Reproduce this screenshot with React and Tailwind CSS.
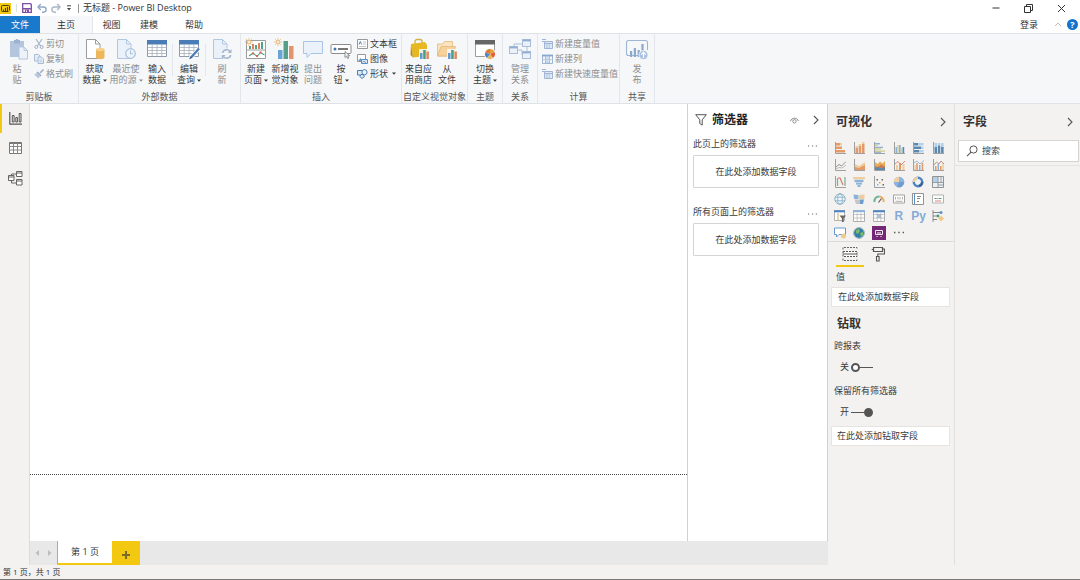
import React, { useState } from "react";

/* ---------- drawing helpers ---------- */

function Svg({ w = 12, h = 12, box, children }) {
  return (
    <svg
      width={w}
      height={h}
      viewBox={box || `0 0 ${w} ${h}`}
      fill="none"
      className="block shrink-0"
      aria-hidden="true"
    >
      {children}
    </svg>
  );
}

const Caret = () => (
  <span className="ml-[2px] inline-block align-middle">
    <Svg w={4} h={3}>
      <path d="M0 .5h4L2 2.8z" fill="currentColor" />
    </Svg>
  </span>
);

const Chevron = () => (
  <Svg w={6} h={10}>
    <path d="M1 1l4 4-4 4" stroke="#555" strokeWidth="1.1" />
  </Svg>
);

const AXIS = "#959595";
const OR = "#e39a66";
const BL = "#8fb3d8";
const NV = "#5c87af";
const TN = "#efcd9c";

const Axes = () => <path d="M1.5 0v11.5H12" stroke={AXIS} strokeWidth=".9" />;

/* [x, y, w, h, colour] tuples drawn as filled bars */
const Bars = ({ list }) =>
  list.map(([x, y, w, h, c], i) => (
    <rect key={i} x={x} y={y} width={w} height={h} fill={c} />
  ));

/* ---------- ribbon icons ---------- */

const PasteIcon = () => (
  <Svg w={22} h={22}>
    <path d="M4 3h14v16H4z" fill="#b4c5de" />
    <path d="M8 2h1.500a1.600 1.600 0 0 1 3 0H14v3.500H8z" fill="#9db2d0" />
    <path d="M13 9h5l3.500 3.500V21H13z" fill="#eef3f9" stroke="#b4c5de" />
    <path d="M18 9v3.500h3.500" stroke="#b4c5de" />
  </Svg>
);

const CutIcon = () => (
  <Svg w={10} h={10}>
    <path d="M2 0l4.600 7M8 0L3.400 7" stroke="#a3b2c9" strokeWidth="1.100" />
    <circle cx="2.300" cy="8" r="1.500" stroke="#a3b2c9" />
    <circle cx="7.700" cy="8" r="1.500" stroke="#a3b2c9" />
  </Svg>
);

const CopyIcon = () => (
  <Svg w={10} h={10}>
    <path d="M.5.5h4l1.500 1.500v5H.5z" fill="#e6edf6" stroke="#a9bdda" />
    <path d="M4 3h3.500l2 2v4.500H4z" fill="#e6edf6" stroke="#a9bdda" />
    <path d="M5.500 6h2.500M5.500 7.700h2.500" stroke="#a9bdda" strokeWidth=".7" />
  </Svg>
);

const BrushIcon = () => (
  <Svg w={10} h={10}>
    <path d="M9.500.5L6 4" stroke="#a3b2c9" strokeWidth="1.600" />
    <path d="M3.500 2.500l4 4-1 1-4-4z" fill="#8fa3c2" />
    <path d="M2.500 4L.3 5.500l4 4L6 7.500z" fill="#b6c5dc" />
  </Svg>
);

const PageShape = ({ stroke, fill }) => (
  <>
    <path d="M2.500 1.500h9L16 6v14.500H2.500z" fill={fill} stroke={stroke} />
    <path d="M11.500 1.500V6H16" stroke={stroke} />
  </>
);

const GetDataIcon = () => (
  <Svg w={22} h={22}>
    <PageShape stroke="#9c9c9c" fill="#fff" />
    <path d="M12 11.500v8c0 2.200 8.500 2.200 8.500 0v-8z" fill="#eeb75c" />
    <ellipse cx="16.250" cy="11.500" rx="4.250" ry="1.700" fill="#f6d08c" />
  </Svg>
);

const RecentIcon = () => (
  <Svg w={22} h={22}>
    <PageShape stroke="#b3c7e2" fill="#eaf1f9" />
    <circle cx="15.500" cy="15.500" r="4.800" fill="#eef4fb" stroke="#a9c0de" strokeWidth="1.200" />
    <path d="M15.500 12.500v3.300h2.500" stroke="#a9c0de" strokeWidth="1.100" />
  </Svg>
);

const TableShape = () => (
  <>
    <path d="M1.500 2.500h19v16h-19z" fill="#fff" stroke="#8e9aa8" />
    <path d="M1 2h20v4.500H1z" fill="#4a7db5" />
    <path
      d="M1.500 9.500h19M1.500 12.500h19M1.500 15.500h19M6.200 6.500v12M11 6.500v12M15.800 6.500v12"
      stroke="#a6b0bc"
      strokeWidth=".8"
    />
  </>
);

const EnterDataIcon = () => (
  <Svg w={22} h={22}>
    <TableShape />
  </Svg>
);

const EditQueryIcon = () => (
  <Svg w={22} h={22}>
    <TableShape />
    <path d="M21 10.500L12.500 20" stroke="#fff" strokeWidth="4" />
    <path d="M21 10.500L13.500 19" stroke="#4a7db5" strokeWidth="2.400" />
    <path d="M12.500 18l2 1.800-3.300 1.500z" fill="#2c5687" />
  </Svg>
);

const RefreshIcon = () => (
  <Svg w={22} h={22}>
    <PageShape stroke="#b3c7e2" fill="#eaf1f9" />
    <circle cx="15.500" cy="16" r="5.500" fill="#f5f8fb" />
    <path d="M11.500 15a4.200 4.200 0 0 1 7.500-1.500M19.700 17a4.200 4.200 0 0 1-7.500 1.500" stroke="#a8b9cf" strokeWidth="1.700" />
    <path d="M20.500 11v4h-4zM10.800 21v-4h4z" fill="#a8b9cf" />
  </Svg>
);

const Spark = () => (
  <g stroke="#e8bd80" strokeWidth=".9">
    <path d="M4 0v8M0 4h8M1.200 1.200l5.600 5.600M6.800 1.200L1.200 6.800" />
    <circle cx="4" cy="4" r="1.500" fill="#fff" />
  </g>
);

const NewPageIcon = () => (
  <Svg w={22} h={22}>
    <path d="M1.500 2.500h19v18h-19z" fill="#fff" stroke="#9c9c9c" />
    <path d="M1.500 12h19" stroke="#9c9c9c" />
    <Bars
      list={[
        [4, 8, 2, 3, "#4fa285"],
        [7, 6, 2, 5, "#e0805c"],
        [10, 7, 2, 4, "#4fa285"],
        [13, 5, 2, 6, "#e0805c"],
        [16, 4, 2, 7, "#4fa285"],
      ]}
    />
    <path d="M4 18l4-3 4 3.500 3.500-4 4 2.500" stroke="#4fa285" strokeWidth="1.100" />
    <path d="M7 15.500h2M14.500 14.500h2M11 18h2" stroke="#d96a4d" strokeWidth="1.800" />
    <Spark />
  </Svg>
);

const NewVisualIcon = () => (
  <Svg w={22} h={22}>
    <Bars
      list={[
        [4, 12, 4.500, 9, "#6aa3d6"],
        [9.500, 3, 4.500, 18, "#56a08a"],
        [15, 8, 4.500, 13, "#e4946b"],
      ]}
    />
    <Spark />
  </Svg>
);

const AskIcon = () => (
  <Svg w={22} h={22}>
    <path d="M1.500 3.500h19v12H9l-4 4v-4H1.500z" fill="#eaf1f9" stroke="#a9c4e6" />
  </Svg>
);

const ButtonIcon = () => (
  <Svg w={22} h={22}>
    <rect x="1" y="6.500" width="20" height="9" rx="1" fill="#fff" stroke="#8c8c8c" />
    <circle cx="5" cy="11" r="1.500" fill="#3f75b0" />
    <path d="M8 11h10" stroke="#555" strokeWidth="1.600" />
    <path d="M15 13.500v6l1.500-1.300 1.200 2.400 1.100-.6-1.100-2.300h2z" fill="#fff" stroke="#777" strokeWidth=".8" />
  </Svg>
);

const TextBoxIcon = () => (
  <Svg w={11} h={10}>
    <path d="M.5.5h10v9H.5z" fill="#fff" stroke="#999" />
    <path d="M2 5.500L3.300 2.500l1.300 3" stroke="#3f75b0" strokeWidth=".9" />
    <path d="M6 3h3M6 5h3M2 7.500h7" stroke="#aaa" strokeWidth=".7" />
  </Svg>
);

const ImageIcon = () => (
  <Svg w={11} h={10}>
    <path d="M.5.5h8v7h-8z" fill="#fff" stroke="#999" />
    <path d="M1 7l2.500-3L6 7z" fill="#6a9bce" />
    <path d="M4.500 5.500h6v4h-6z" fill="#d7e5f4" stroke="#5c8dc3" />
    <path d="M5.500 8.500l1.500-1.500 2 2" stroke="#5c8dc3" strokeWidth=".8" />
  </Svg>
);

const ShapesIcon = () => (
  <Svg w={11} h={10}>
    <path d="M.5 1.500h5v4.500h-5z" fill="#dce8f5" stroke="#4a7db5" />
    <circle cx="7.500" cy="3.200" r="2.600" fill="#eef4fb" stroke="#4a7db5" />
    <path d="M5 5l2.700 2.300L5 9.500 2.700 7.300z" fill="#dce8f5" stroke="#4a7db5" />
  </Svg>
);

const MiniBars = () => (
  <>
    <rect x="11" y="11" width="11" height="11" fill="#f5f8fb" opacity=".85" />
    <Bars
      list={[
        [12, 15, 2.500, 6, "#5f9bd0"],
        [15.200, 12, 2.500, 9, "#4b9b83"],
        [18.400, 13.500, 2.500, 7.500, "#e0895e"],
      ]}
    />
  </>
);

const MarketIcon = () => (
  <Svg w={22} h={22}>
    <path d="M7 6V3.500a2 2 0 0 1 2-2h3a2 2 0 0 1 2 2V6" stroke="#d0b040" strokeWidth="1.300" />
    <path d="M3 6l14-2 2 3v11L5 19.500z" fill="#e6b821" />
    <path d="M3 6l2 13.500L2.500 17z" fill="#b98f12" />
    <MiniBars />
  </Svg>
);

const FolderIcon = () => (
  <Svg w={22} h={22}>
    <path d="M1.500 18V6h5l2-2.500h8V18z" fill="#fae3bd" stroke="#e3b878" strokeWidth=".8" />
    <path d="M1.500 18L5 8.500h14.500L17 18z" fill="#f6d29a" stroke="#e3b878" strokeWidth=".8" />
    <MiniBars />
  </Svg>
);

const ThemeIcon = () => (
  <Svg w={22} h={22}>
    <path d="M1.500 2.500h19v16h-19z" fill="#fff" stroke="#9c9c9c" />
    <path d="M1 2h20v4.500H1z" fill="#666" />
    <circle cx="16" cy="16" r="5.800" fill="#f5f8fb" />
    <path d="M16 16V11a5 5 0 0 1 4.500 3z" fill="#e8a33c" />
    <path d="M16 16l4.500-2a5 5 0 0 1-1.500 6z" fill="#e0603c" />
    <path d="M16 16l3 4a5 5 0 0 1-6 0z" fill="#e8b45c" />
    <path d="M16 16l-3 4a5 5 0 0 1-1.800-5.500z" fill="#4f86c6" />
    <path d="M16 16l-4.800-1.500A5 5 0 0 1 16 11z" fill="#e07a3c" />
  </Svg>
);

const RelationIcon = () => (
  <Svg w={22} h={22}>
    <path d="M5 9V6h9M9 12h4v5h1M18 8v5" stroke="#aebfd6" />
    {[
      [0.5, 8.5],
      [13.5, 1.5],
      [13.5, 13.5],
    ].map(([x, y]) => (
      <g key={`${x}-${y}`}>
        <rect x={x} y={y} width="8" height="7" fill="#eaf1f9" stroke="#a9bdda" />
        <path d={`M${x} ${y + 1}h8`} stroke="#93aed2" strokeWidth="1.800" />
      </g>
    ))}
  </Svg>
);

const MeasureIcon = () => (
  <Svg w={11} h={10}>
    <path d="M0 .5h4M0 2.500h3" stroke="#9bb5d8" />
    <path d="M2.500 2.500h8v7h-8z" fill="#dfe9f5" stroke="#9fb5d3" />
    <path d="M3 4.500h7" stroke="#9fb5d3" />
    <path d="M4 6h1.500M6.500 6H8M4 8h1.500M6.500 8H8" stroke="#9fb5d3" />
  </Svg>
);

const ColumnIcon = () => (
  <Svg w={11} h={10}>
    <path d="M.5 1.500h10v8H.5z" fill="#f2f6fb" stroke="#9fb5d3" />
    <path d="M0 1.500h11" stroke="#86a5cf" strokeWidth="1.800" />
    <path d="M3.500 2h4v7h-4z" fill="#cfdff1" stroke="#9fb5d3" strokeWidth=".8" />
    <path d="M.5 5.500h10" stroke="#b6c7dd" strokeWidth=".8" />
  </Svg>
);

const PublishIcon = () => (
  <Svg w={24} h={22}>
    <path d="M15 17.500H3.500a2 2 0 0 1-2-2v-11a2 2 0 0 1 2-2h17a2 2 0 0 1 2 2V12" stroke="#9db6d6" strokeWidth="1.100" />
    <Bars
      list={[
        [5, 13, 2.200, 6, "#8ba8cd"],
        [8.800, 10, 2.200, 9, "#8ba8cd"],
        [12.600, 12, 2.200, 7, "#8ba8cd"],
        [16.400, 6, 2.200, 8, "#8ba8cd"],
      ]}
    />
    <circle cx="18.500" cy="17" r="4.500" fill="#a9c0df" stroke="#f5f8fb" strokeWidth=".8" />
    <path d="M18.500 20v-5.500M16.200 16.600l2.300-2.300 2.300 2.300" stroke="#fff" strokeWidth="1.200" />
  </Svg>
);

/* ---------- ribbon building blocks ---------- */

function BigButton({ icon, lines, caret, disabled, width = "w-7" }) {
  return (
    <button
      type="button"
      disabled={disabled}
      className={`flex shrink-0 flex-col items-center gap-[3px] whitespace-nowrap pt-[2px] leading-[11px] ${width} ${
        disabled ? "text-[#8d8d8d]" : "text-[#3a3a3a]"
      }`}
    >
      {icon}
      <span>
        {lines[0]}
        <br />
        {lines[1]}
        {caret && <Caret />}
      </span>
    </button>
  );
}

function SmallButton({ icon, label, caret, disabled }) {
  return (
    <button
      type="button"
      disabled={disabled}
      className={`flex h-[15px] items-center gap-[2px] whitespace-nowrap ${
        disabled ? "text-[#8d8d8d]" : "text-[#3a3a3a]"
      }`}
    >
      {icon}
      <span>{label}</span>
      {caret && <Caret />}
    </button>
  );
}

function Group({ label, width, children }) {
  return (
    <section
      aria-label={label}
      className={`flex shrink-0 flex-col justify-between border-r border-[#e3e6ea] pt-[2px] ${width}`}
    >
      <div className="flex items-start">{children}</div>
      <div className="whitespace-nowrap pb-px text-center leading-[11px] text-[#555]">{label}</div>
    </section>
  );
}

const Sep = () => <span className="mt-2 h-8 w-px shrink-0 bg-[#e3e6ea]" />;

function Ribbon() {
  return (
    <div className="flex h-[71px] overflow-hidden border-y border-[#dfe2e6] bg-[#f5f7f9]">
      <Group label="剪贴板" width="w-[79px]">
        <BigButton icon={<PasteIcon />} lines={["粘", "贴"]} disabled width="w-[34px]" />
        <div>
          <SmallButton icon={<CutIcon />} label="剪切" disabled />
          <SmallButton icon={<CopyIcon />} label="复制" disabled />
          <SmallButton icon={<BrushIcon />} label="格式刷" disabled />
        </div>
      </Group>
      <Group label="外部数据" width="w-[162px]">
        <BigButton icon={<GetDataIcon />} lines={["获取", "数据"]} caret width="w-[31px]" />
        <BigButton icon={<RecentIcon />} lines={["最近使", "用的源"]} caret disabled width="w-8" />
        <BigButton icon={<EnterDataIcon />} lines={["输入", "数据"]} width="w-[30px]" />
        <Sep />
        <BigButton icon={<EditQueryIcon />} lines={["编辑", "查询"]} caret width="w-8" />
        <Sep />
        <BigButton icon={<RefreshIcon />} lines={["刷", "新"]} disabled width="w-8" />
      </Group>
      <Group label="插入" width="w-[161px]">
        <BigButton icon={<NewPageIcon />} lines={["新建", "页面"]} caret width="w-[30px]" />
        <BigButton icon={<NewVisualIcon />} lines={["新增视", "觉对象"]} />
        <BigButton icon={<AskIcon />} lines={["提出", "问题"]} disabled />
        <BigButton icon={<ButtonIcon />} lines={["按", "钮"]} caret />
        <div className="ml-[2px]">
          <SmallButton icon={<TextBoxIcon />} label="文本框" />
          <SmallButton icon={<ImageIcon />} label="图像" />
          <SmallButton icon={<ShapesIcon />} label="形状" caret />
        </div>
      </Group>
      <Group label="自定义视觉对象" width="w-[66px]">
        <BigButton icon={<MarketIcon />} lines={["来自应", "用商店"]} width="w-[33px]" />
        <BigButton icon={<FolderIcon />} lines={["从", "文件"]} width="w-6" />
      </Group>
      <Group label="主题" width="w-[35px]">
        <BigButton icon={<ThemeIcon />} lines={["切换", "主题"]} caret width="w-[34px]" />
      </Group>
      <Group label="关系" width="w-[35px]">
        <BigButton icon={<RelationIcon />} lines={["管理", "关系"]} disabled width="w-[34px]" />
      </Group>
      <Group label="计算" width="w-[82px]">
        <div className="ml-1">
          <SmallButton icon={<MeasureIcon />} label="新建度量值" disabled />
          <SmallButton icon={<ColumnIcon />} label="新建列" disabled />
          <SmallButton icon={<MeasureIcon />} label="新建快速度量值" disabled />
        </div>
      </Group>
      <Group label="共享" width="w-[35px]">
        <BigButton icon={<PublishIcon />} lines={["发", "布"]} disabled width="w-[34px]" />
      </Group>
    </div>
  );
}

/* ---------- title bar and ribbon tabs ---------- */

function TitleBar() {
  return (
    <header className="flex h-4 items-center bg-white text-[#333]">
      <span className="flex h-[11px] w-[11px] items-center justify-center bg-[#f2c811]">
        <Svg w={9} h={7}>
          <path d="M7.500 6.500H1.500a1 1 0 0 1-1-1v-4a1 1 0 0 1 1-1h6a1 1 0 0 1 1 1v4" stroke="#4a3f10" />
          <path d="M2.500 6V4.500M4.500 6V3M6.500 6V2" stroke="#4a3f10" strokeWidth="1.100" />
        </Svg>
      </span>
      <span className="mx-[5px] h-2 w-px bg-[#ddd]" />
      <button type="button" aria-label="保存">
        <Svg w={10} h={10}>
          <path d="M.7.7h7.800l.8.8v7.800H.7z" fill="#fff" stroke="#7f4ea0" strokeWidth="1.300" />
          <path d="M1 5h8v1.500H1z" fill="#7f4ea0" />
          <path d="M3 6.500h4V9H3z" fill="#7f4ea0" />
          <path d="M4 7.500h1V9H4z" fill="#fff" />
        </Svg>
      </button>
      <button type="button" aria-label="撤消" className="ml-[5px]">
        <Svg w={10} h={10}>
          <path d="M1 4h5.500a2.500 2.500 0 0 1 0 5.200H5" stroke="#8fa8c6" strokeWidth="1.400" />
          <path d="M3.800 1L1 4l2.800 3" stroke="#8fa8c6" strokeWidth="1.400" />
        </Svg>
      </button>
      <button type="button" aria-label="恢复" className="ml-1">
        <Svg w={10} h={10}>
          <path d="M9 4H3.500a2.500 2.500 0 0 0 0 5.200H5" stroke="#a9b7c7" strokeWidth="1.400" />
          <path d="M6.200 1L9 4 6.200 7" stroke="#a9b7c7" strokeWidth="1.400" />
        </Svg>
      </button>
      <button type="button" aria-label="自定义快速访问工具栏" className="ml-[6px]">
        <Svg w={4} h={6}>
          <path d="M0 .8h4" stroke="#444" />
          <path d="M0 3h4L2 5.500z" fill="#444" />
        </Svg>
      </button>
      <span className="ml-[7px] mr-1 h-[9px] w-px bg-[#999]" />
      <h1 className="whitespace-nowrap leading-4">无标题 - Power BI Desktop</h1>
      <div className="ml-auto flex items-center gap-6 pr-[14px]">
        <button type="button" aria-label="最小化">
          <Svg w={8} h={10}>
            <path d="M.5 5h7" stroke="#333" />
          </Svg>
        </button>
        <button type="button" aria-label="还原">
          <Svg w={9} h={9}>
            <path d="M.5 2.500h6v6h-6z" stroke="#333" />
            <path d="M2.500 2.500v-2h6v6h-2" stroke="#333" />
          </Svg>
        </button>
        <button type="button" aria-label="关闭">
          <Svg w={9} h={9}>
            <path d="M1 1l7 7M8 1L1 8" stroke="#333" />
          </Svg>
        </button>
      </div>
    </header>
  );
}

function RibbonTabs() {
  return (
    <nav className="flex h-[17px] items-stretch bg-white text-[#333]">
      <button type="button" className="w-10 bg-[#1979ca] text-white">
        文件
      </button>
      <button type="button" className="w-[53px] border-r border-[#e3e6ea] bg-[#f5f7f9]">
        主页
      </button>
      <button type="button" className="w-[37px]">
        视图
      </button>
      <button type="button" className="w-[38px]">
        建模
      </button>
      <button type="button" className="w-[52px]">
        帮助
      </button>
      <div className="ml-auto flex items-center pr-[2px]">
        <button type="button" className="mr-4">
          登录
        </button>
        <button type="button" aria-label="折叠功能区" className="mr-[5px]">
          <Svg w={8} h={5}>
            <path d="M1 4l3-3 3 3" stroke="#cdbcae" />
          </Svg>
        </button>
        <button
          type="button"
          aria-label="帮助主题"
          className="h-[11px] w-[11px] rounded-full bg-[#1272cc] text-[9px] font-bold leading-[11px] text-white"
        >
          ?
        </button>
      </div>
    </nav>
  );
}

/* ---------- left rail ---------- */

function Rail() {
  return (
    <nav className="flex w-[30px] shrink-0 flex-col border-r border-[#dcdcdc] bg-[#f3f2f1]">
      <button
        type="button"
        aria-label="报表"
        className="flex h-[29px] items-center border-l-2 border-[#f2c811] pl-[7px]"
      >
        <Svg w={13} h={13}>
          <path d="M.8 0v12.200H13" stroke="#555" strokeWidth="1.200" />
          <path d="M3.300 3.500h1.800v6.500H3.300zM6.800 5.500h1.600V10H6.800zM10.200 1.500h1.800V10h-1.800z" stroke="#555" />
        </Svg>
      </button>
      <button type="button" aria-label="数据" className="flex h-[30px] items-center pl-[9px]">
        <Svg w={13} h={12}>
          <path d="M.5.5h12v11H.5z" fill="#fff" stroke="#777" />
          <path d="M.5 1.500h12" stroke="#777" />
          <path d="M.5 4.500h12M.5 8h12M4.500 1v10.500M8.500 1v10.500" stroke="#888" />
        </Svg>
      </button>
      <button type="button" aria-label="模型" className="flex h-[30px] items-center pl-2">
        <Svg w={15} h={15}>
          <path d="M3.500 4.500V3H8.500M3.500 9v3H8" stroke="#666" />
          <path d="M.5 4.500h5.500v5H.5zM8.500.5h5.500v5H8.500zM8.500 8.500h5.500v5.500H8.500z" fill="#fff" stroke="#666" />
          <path d="M.5 6h5.500M8.500 2h5.500M8.500 10h5.500" stroke="#666" />
        </Svg>
      </button>
    </nav>
  );
}

/* ---------- filter pane ---------- */

function FilterSection({ title }) {
  return (
    <section>
      <div className="flex h-4 items-center justify-between">
        <h3>{title}</h3>
        <button type="button" aria-label={`${title}选项`} className="pr-[2px]">
          <Svg w={9} h={8}>
            <path d="M0 6h1.200M4 6h1.200M7.800 6H9" stroke="#666" />
          </Svg>
        </button>
      </div>
      <div className="mt-[3px] flex h-[33px] items-center justify-center rounded-[1px] border border-[#d4d4d4]">
        在此处添加数据字段
      </div>
    </section>
  );
}

function FilterPane() {
  return (
    <aside className="flex w-[141px] shrink-0 flex-col border-x border-[#d0d0d0] bg-white pl-[5px] pr-2 text-[#3a3a3a]">
      <div className="flex h-8 items-center pl-[2px]">
        <Svg w={12} h={12}>
          <path d="M.7.7h10.600L7.200 5.800v5.300L4.800 9.500V5.800z" stroke="#555" />
        </Svg>
        <h2 className="ml-[5px] text-[12px] font-bold text-[#222]">筛选器</h2>
        <button type="button" aria-label="显示筛选器" className="ml-auto mr-[14px]">
          <Svg w={9} h={7}>
            <path d="M.5 4C2 .3 7 .3 8.500 4" stroke="#777" strokeWidth=".9" />
            <circle cx="4.500" cy="4.300" r="1.700" stroke="#777" strokeWidth=".8" />
          </Svg>
        </button>
        <button type="button" aria-label="折叠筛选器">
          <Chevron />
        </button>
      </div>
      <div className="flex flex-col gap-4">
        <FilterSection title="此页上的筛选器" />
        <FilterSection title="所有页面上的筛选器" />
      </div>
    </aside>
  );
}

/* ---------- visualization gallery ---------- */

const Grid = ({ head, shade }) => (
  <>
    <path d="M.5.500h11v11H.5z" fill="#fff" stroke="#a5a5a5" strokeWidth=".9" />
    {shade && <path d="M4 4h4v4H4z" fill="#a9c8e6" />}
    <path d="M.5 4.500h11M.5 8h11M4.200 3v8.500M7.900 3v8.500" stroke="#b0b0b0" strokeWidth=".7" />
    <path d="M0 1.300h12" stroke={head} strokeWidth="2" />
  </>
);

const VISUALS = [
  ["堆积条形图", <><Axes /><Bars list={[[2, 1, 4, 2.5, OR], [6, 1, 2, 2.5, TN], [2, 4.5, 6, 2.5, OR], [2, 8, 6, 2.5, OR], [8, 8, 3, 2.5, OR]]} /></>],
  ["堆积柱形图", <><Axes /><Bars list={[[2.500, 6, 2.5, 5, OR], [2.5, 4, 2.5, 2, TN], [5.7, 4, 2.5, 7, OR], [5.7, 2, 2.5, 2, TN], [9, 2, 2.5, 9, OR], [9, 0, 2.5, 2, TN]]} /></>],
  ["簇状条形图", <><Axes /><Bars list={[[2, 1, 5, 1.5, BL], [2, 2.5, 3, 1.5, "#d3d392"], [2, 4.7, 8, 1.5, BL], [2, 6.2, 6, 1.5, "#d3d392"], [2, 8.4, 10, 1.5, "#d3d392"], [2, 9.7, 6, 1.2, BL]]} /></>],
  ["簇状柱形图", <><Axes /><Bars list={[[2.5, 5, 1.7, 6, BL], [4.2, 3, 1.5, 8, "#d3d392"], [6, 3, 1.7, 8, BL], [7.7, 6, 1.2, 5, "#d3d392"], [9.500, 5, 1.7, 6, NV]]} /></>],
  ["百分比堆积条形图", <><Axes /><Bars list={[[2, 1, 4, 2.5, NV], [6, 1, 5.5, 2.5, "#b3d0ea"], [2, 4.5, 7, 2.5, NV], [9, 4.5, 2.5, 2.5, "#b3d0ea"], [2, 8, 5, 2.5, NV], [7, 8, 4.5, 2.5, "#b3d0ea"]]} /></>],
  ["百分比堆积柱形图", <><Axes /><Bars list={[[2.5, 1, 2.5, 4, "#b3d0ea"], [2.5, 5, 2.5, 6, NV], [5.8, 1, 2.5, 2.5, "#b3d0ea"], [5.8, 3.5, 2.5, 7.5, NV], [9.1, 1, 2.5, 6, "#b3d0ea"], [9.1, 5, 2.5, 6, NV]]} /></>],
  ["折线图", <><Axes /><path d="M2 8l3-2.500 2.500 1.500L12 2.500" stroke="#888" strokeWidth=".9" /><path d="M2 10l3-1.500 3 .5 4-3" stroke="#b5b5b5" strokeWidth=".9" /></>],
  ["分区图", <><Axes /><path d="M2 5l4 2 6-4v8H2z" fill={TN} /><path d="M2 8l4 1L12 6v5H2z" fill={OR} /></>],
  ["堆积面积图", <><Axes /><path d="M2 3l2.500 2L7 2.500l2.500 2L12 2v9H2z" fill="#ebac58" /><path d="M2 7l3 1 3-2.500 4 2V11H2z" fill="#cf7a50" /><path d="M2 9l3-1 3 1.500 4-1.500v3H2z" fill={NV} /></>],
  ["折线和堆积柱形图", <><Axes /><Bars list={[[3, 6, 2, 5, TN], [6, 4, 2, 7, OR], [9.500, 5, 2, 6, TN]]} /><path d="M2 5l3-2.500L8 6l4-4" stroke="#d9826b" strokeWidth=".9" /></>],
  ["折线和簇状柱形图", <><Axes /><Bars list={[[2.5, 6, 1.5, 5, TN], [4.3, 4, 1.500, 7, OR], [7, 6, 1.5, 5, BL], [9.7, 4, 1.5, 7, OR]]} /><path d="M2 4l3-2 3 3 4-3.500" stroke={BL} strokeWidth=".9" /></>],
  ["功能区图表", <><Axes /><Bars list={[[3, 7, 1.5, 4, OR], [5.500, 5, 1.5, 6, BL], [8, 7, 1.5, 4, OR], [10.3, 4, 1.500, 7, TN]]} /><path d="M2 6l2.500-3L7 5l2-3 3 3" stroke="#b08d80" strokeWidth=".9" /></>],
  ["瀑布图", <><Axes /><path d="M3.500 2v8M11 1v9" stroke="#7fb09c" strokeWidth="1.300" /><path d="M4 2h2l3 7" stroke="#d0786c" strokeWidth="1.200" /></>],
  ["漏斗图", <Bars list={[[0, 1, 12, 2.3, TN], [1.5, 3.8, 9, 2.3, BL], [3, 6.600, 6, 2, BL], [4.500, 9, 3, 2, BL]]} />],
  ["散点图", <><Axes /><Bars list={[[3.5, 3, 1.5, 1.5, "#666"], [6, 6, 1.500, 1.5, OR], [8.500, 3, 1.5, 1.5, "#666"], [4, 8, 1.5, 1.500, BL], [9.5, 8, 1.5, 1.5, "#666"]]} /></>],
  ["饼图", <><circle cx="6" cy="6" r="5.300" fill="#8cb4de" /><path d="M6 6V.7A5.300 5.300 0 0 0 .7 6z" fill="#f0cfa5" /><path d="M6 6l5.300 0A5.300 5.300 0 0 1 4 11z" fill="#6f9dd0" /></>],
  ["环形图", <><circle cx="6" cy="6" r="4.200" stroke="#4b84c2" strokeWidth="2.400" /><path d="M6 1.800A4.200 4.200 0 0 0 1.800 6" stroke={TN} strokeWidth="2.400" /><path d="M10.200 6A4.200 4.200 0 0 1 7 10" stroke="#3a6696" strokeWidth="2.400" /></>],
  ["树状图", <><path d="M.5.500h11v11H.5z" fill="#e8f0f8" stroke="#888" strokeWidth=".9" /><path d="M1 1h5v5H1z" fill="#b4cfe8" /><path d="M6 .5v11M.5 6.500h11M9 .5v6M6 9h5.500" stroke="#888" strokeWidth=".8" /></>],
  ["地图", <><circle cx="6" cy="6" r="5.200" fill="#f0f7fb" stroke="#7fa9c2" strokeWidth=".9" /><ellipse cx="6" cy="6" rx="2.300" ry="5.200" stroke="#7fa9c2" strokeWidth=".8" /><path d="M1 4.200h10M1 7.800h10" stroke="#7fa9c2" strokeWidth=".8" /></>],
  ["着色地图", <><path d="M.5 1.500l5 .5v4L1 6z" fill={BL} /><path d="M6 2l5.500-.5V6H6z" fill={TN} /><path d="M1.500 6.500l4.500 0v4.500H3z" fill="#c6c6c6" /><path d="M6.500 6.500H11l-1 4.500H6.500z" fill="#6f9dd0" /></>],
  ["仪表", <><path d="M1.500 9A4.600 4.600 0 0 1 6 3.500" stroke="#74ae95" strokeWidth="2" /><path d="M6 3.500A4.600 4.600 0 0 1 10.500 9" stroke="#e8b06a" strokeWidth="2" /><path d="M5.500 9.500l3-4" stroke="#555" strokeWidth="1.100" /></>],
  ["卡片图", <><path d="M.5 2h11v8H.5z" fill="#fff" stroke="#999" strokeWidth=".9" /><path d="M2.500 4v2.500M5 4v2.500M7 4v2.500M9.500 4v2.500M2.500 8.300h7" stroke="#999" strokeWidth=".8" /></>],
  ["多行卡", <><path d="M.5.500h11v11H.5z" fill="#fff" stroke="#888" strokeWidth=".9" /><path d="M2.500 1v10" stroke="#5b8fc9" /><path d="M5 3.500h4M5 5.500h3M5 8.500h2" stroke="#777" strokeWidth=".9" /></>],
  ["KPI", <><path d="M.5 2h11v8H.5z" fill="#fff" stroke="#aaa" strokeWidth=".9" /><path d="M2.500 5.500h2M7 5.500h2.500" stroke="#4b9b83" strokeWidth="1.200" /><path d="M5 5.500h1.500M3 8h6" stroke="#d0685a" strokeWidth=".8" /></>],
  ["切片器", <><path d="M.5.500h10v10H.5z" fill="#fff" stroke="#aaa" strokeWidth=".9" /><path d="M0 1.300h11" stroke="#4b84c2" strokeWidth="2" /><path d="M4 3v7" stroke="#e5a04c" /><path d="M5.500 5.500H12L9.700 8.500V12H7.900V8.500z" fill="#666" /></>],
  ["表", <Grid head="#8cb4de" />],
  ["矩阵", <Grid head="#4b84c2" shade />],
  ["R 脚本视觉对象", "R"],
  ["Python 视觉对象", "Py"],
  ["关键影响者", <><path d="M1 0v12" stroke="#888" strokeWidth=".9" /><path d="M1 2.500h7M1 6h5M1 9.500h4" stroke="#777" strokeWidth=".9" /><circle cx="9" cy="2.500" r="1.500" fill="#5b8fc9" /><circle cx="6" cy="6" r="1.400" fill="#4b9b83" /><path d="M9 5.500l3 3-3 3-3-3z" fill="#f0c987" /></>],
  ["问答", <><path d="M.5 1h11v6.500H5L2.500 10V7.500h-2z" fill="#fff" stroke="#5b8fc9" strokeWidth=".9" /><circle cx="9.500" cy="9" r="2.500" fill="#f0cd86" /></>],
  ["ArcGIS 地图", <><circle cx="6" cy="6" r="5" fill="#2e7fa8" /><path d="M3 3l3-1 1 2-2 3-2-1zM7 6l3-1v3L8 10z" fill="#7cb868" /><circle cx="6" cy="6" r="5.400" stroke="#8aa5b0" strokeWidth=".9" /></>],
];

function VisualButton({ name, art }) {
  return (
    <button type="button" aria-label={name} title={name} className="flex items-center justify-center">
      {typeof art === "string" ? (
        <span className="font-['Liberation_Sans',sans-serif] text-[12px] font-bold leading-none text-[#86abd6]">
          {art}
        </span>
      ) : (
        <Svg>{art}</Svg>
      )}
    </button>
  );
}

function Toggle({ label, id, initial }) {
  const [on, setOn] = useState(initial);
  return (
    <label htmlFor={id} className="flex cursor-pointer items-center gap-[2px] pl-[6px]">
      <span>{on ? "开" : "关"}</span>
      <input
        id={id}
        type="checkbox"
        role="switch"
        aria-label={label}
        checked={on}
        onChange={() => setOn(!on)}
        className="sr-only"
      />
      <span className={`flex w-[22px] items-center ${on ? "" : "flex-row-reverse"}`}>
        <span className="h-px flex-1 bg-[#555]" />
        <span
          className={`h-[9px] w-[9px] rounded-full border-2 border-[#555] ${on ? "bg-[#555]" : "bg-white"}`}
        />
      </span>
    </label>
  );
}

function VisualPane() {
  return (
    <aside className="flex w-[127px] shrink-0 flex-col border-r border-[#e2e0de] bg-[#f3f2f1] text-[#3a3a3a]">
      <div className="flex h-[35px] items-center justify-between pl-2 pr-2">
        <h2 className="text-[12px] font-bold text-[#333]">可视化</h2>
        <button type="button" aria-label="折叠可视化">
          <Chevron />
        </button>
      </div>
      <div className="ml-[2px] mr-[6px] grid auto-rows-[17px] grid-cols-6">
        {VISUALS.map(([name, art]) => (
          <VisualButton key={name} name={name} art={art} />
        ))}
        <button type="button" aria-label="Power Apps" className="flex items-center justify-center">
          <Svg w={14} h={14}>
            <path d="M0 0h14v14H0z" fill="#742774" />
            <path d="M3.500 4.500h7v4h-7z" stroke="#fff" strokeWidth=".9" />
            <path d="M5 7h4M4.500 10.500h1M8.500 10.500h1" stroke="#fff" strokeWidth="1.100" />
          </Svg>
        </button>
        <button type="button" aria-label="更多视觉对象" className="flex items-center justify-center">
          <Svg>
            <path d="M1 5.500h1.400M5.300 5.500h1.400M9.600 5.500H11" stroke="#555" strokeWidth="1.300" />
          </Svg>
        </button>
      </div>
      <div className="flex h-[26px] border-t border-[#dddbd9] pl-2">
        <button
          type="button"
          aria-label="字段"
          className="flex w-7 items-center justify-center border-b-2 border-[#f2c811]"
        >
          <Svg w={16} h={16}>
            <path d="M1 3.500v-2h14v2M1 12.500v2h14v-2" stroke="#666" strokeDasharray="2 1" />
            <path d="M1 5.500h14v5H1z" fill="#fff" stroke="#555" strokeDasharray="2 1" />
            <path d="M1 8h14" stroke="#555" />
          </Svg>
        </button>
        <button type="button" aria-label="格式" className="flex w-7 items-center justify-center pb-[2px]">
          <Svg w={14} h={16}>
            <path d="M2.500 1.500h9v4h-9z" stroke="#555" strokeWidth="1.200" />
            <path d="M2.500 3.500H.7M11.500 3h2v5H6.800v2" stroke="#555" strokeWidth="1.100" />
            <path d="M5.500 10.500h2.600v4.500H5.500z" stroke="#555" strokeWidth="1.100" />
          </Svg>
        </button>
      </div>
      <h3 className="flex h-5 items-center pl-2">值</h3>
      <div className="ml-[3px] mr-1 flex h-5 items-center border border-[#e6e4e2] bg-white pl-[6px]">
        在此处添加数据字段
      </div>
      <h2 className="flex h-[33px] items-center pl-[9px] text-[12px] font-bold text-[#333]">钻取</h2>
      <div className="pl-[6px]">
        <h3 className="leading-3">跨报表</h3>
        <div className="flex h-[30px] items-center">
          <Toggle id="cross-report" label="跨报表" initial={false} />
        </div>
        <h3 className="leading-[18px]">保留所有筛选器</h3>
        <div className="flex h-6 items-center">
          <Toggle id="keep-filters" label="保留所有筛选器" initial={true} />
        </div>
      </div>
      <div className="ml-[3px] mr-1 mt-[2px] flex h-5 items-center border border-[#e6e4e2] bg-white pl-[5px]">
        在此处添加钻取字段
      </div>
    </aside>
  );
}

function FieldsPane() {
  return (
    <aside className="w-[125px] shrink-0 bg-[#f3f2f1] text-[#3a3a3a]">
      <div className="flex h-[35px] items-center justify-between pl-2 pr-[7px]">
        <h2 className="text-[12px] font-bold text-[#333]">字段</h2>
        <button type="button" aria-label="折叠字段">
          <Chevron />
        </button>
      </div>
      <div className="border-b border-[#e6e4e2] pb-[3px] pl-[3px] pr-px pt-px">
        <label className="flex h-[22px] items-center border border-[#d6d4d2] bg-white pl-[7px]">
          <Svg w={12} h={12}>
            <circle cx="7.500" cy="4.500" r="3.600" stroke="#555" />
            <path d="M5 7.200L1 11.200" stroke="#555" strokeWidth="1.100" />
          </Svg>
          <input
            type="text"
            aria-label="搜索"
            placeholder="搜索"
            className="ml-1 w-full min-w-0 bg-transparent text-[9px] outline-none placeholder:text-[#444]"
          />
        </label>
      </div>
    </aside>
  );
}

/* ---------- page tabs ---------- */

function PageTabs() {
  return (
    <div className="flex h-6 bg-[#e8e8e8] text-[#333]">
      <div className="flex w-[27px] items-center justify-around">
        <button type="button" aria-label="上一页">
          <Svg w={4} h={6}>
            <path d="M4 0v6L.5 3z" fill="#bdbdbd" />
          </Svg>
        </button>
        <button type="button" aria-label="下一页">
          <Svg w={4} h={6}>
            <path d="M0 0v6l3.500-3z" fill="#bdbdbd" />
          </Svg>
        </button>
      </div>
      <button type="button" className="w-[55px] border-b-2 border-l border-b-[#f2c811] border-l-[#aaa] bg-white">
        第 1 页
      </button>
      <button
        type="button"
        aria-label="新建页"
        className="flex w-7 items-center justify-center bg-[#f2c811] pt-1"
      >
        <Svg w={8} h={8}>
          <path d="M4 0v8M0 4h8" stroke="#7a6b2a" strokeWidth="2" />
        </Svg>
      </button>
    </div>
  );
}

export default function App() {
  return (
    <div className="flex min-h-screen flex-col bg-white font-['Open_Sans','Noto_Sans_CJK_SC',sans-serif] text-[9px] leading-3">
      <TitleBar />
      <RibbonTabs />
      <Ribbon />
      <main className="flex flex-1">
        <Rail />
        <div className="flex min-w-0 flex-1 flex-col">
          <div className="flex flex-1">
            <div className="flex flex-1 flex-col bg-white">
              <div className="flex-1 border-b border-dotted border-[#444]" />
              <div className="h-[66px]" />
            </div>
            <FilterPane />
          </div>
          <PageTabs />
        </div>
        <VisualPane />
        <FieldsPane />
      </main>
      <footer className="border-b border-[#777] bg-[#f3f2f1] pl-[3px] text-[8px] leading-[14px] text-[#333]">
        第 1 页，共 1 页
      </footer>
    </div>
  );
}
